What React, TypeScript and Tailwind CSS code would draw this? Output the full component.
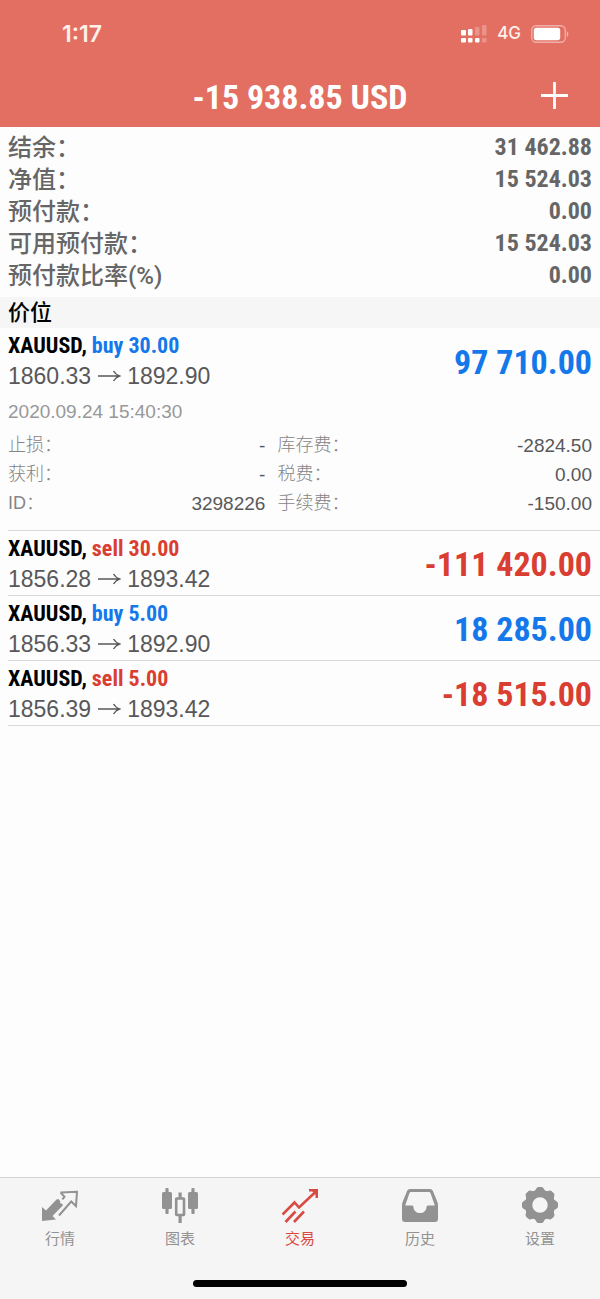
import type { ReactNode } from 'react'

type Side = 'buy' | 'sell'

interface Position {
  symbol: string
  side: Side
  volume: string
  open: string
  current: string
  profit: string
  negative: boolean
}

const summary = [
  { label: '结余：', value: '31 462.88' },
  { label: '净值：', value: '15 524.03' },
  { label: '预付款：', value: '0.00' },
  { label: '可用预付款：', value: '15 524.03' },
  { label: '预付款比率(%)', value: '0.00' },
]

const positions: Position[] = [
  { symbol: 'XAUUSD', side: 'buy', volume: '30.00', open: '1860.33', current: '1892.90', profit: '97 710.00', negative: false },
  { symbol: 'XAUUSD', side: 'sell', volume: '30.00', open: '1856.28', current: '1893.42', profit: '-111 420.00', negative: true },
  { symbol: 'XAUUSD', side: 'buy', volume: '5.00', open: '1856.33', current: '1892.90', profit: '18 285.00', negative: false },
  { symbol: 'XAUUSD', side: 'sell', volume: '5.00', open: '1856.39', current: '1893.42', profit: '-18 515.00', negative: true },
]

const details = [
  { label: '止损：', value: '-' },
  { label: '库存费：', value: '-2824.50' },
  { label: '获利：', value: '-' },
  { label: '税费：', value: '0.00' },
  { label: 'ID：', value: '3298226' },
  { label: '手续费：', value: '-150.00' },
]

const condensed = "font-['Roboto_Condensed',Roboto,sans-serif]"

const StatusBar = () => (
  <div className="flex h-16 items-center justify-between pt-1 pr-[31px] pl-[62px] font-['Inter',sans-serif] text-[#fff0ea]">
    <span className="text-[23px] font-semibold">1:17</span>
    <div className="flex items-center gap-2.5">
      <svg className="h-[18px] w-[26px]" viewBox="0 0 26 18" fill="#fff" aria-hidden="true">
        <rect x="0" y="5" width="5" height="5.5" rx="1" />
        <rect x="7" y="4" width="4.5" height="6.5" rx="1" />
        <rect x="14" y="2" width="4.5" height="8.5" rx="1" opacity="0.25" />
        <rect x="21" y="0" width="4.5" height="10.5" rx="1" opacity="0.25" />
        <rect x="0" y="13" width="5" height="4.5" rx="1" />
        <rect x="7" y="13" width="4.5" height="4.5" rx="1" />
        <rect x="14" y="13" width="4.5" height="4.5" rx="1" />
        <rect x="21" y="13" width="4.5" height="4.5" rx="1" opacity="0.25" />
      </svg>
      <span className="text-[17px] font-medium">4G</span>
      <svg className="h-[18px] w-[38px]" viewBox="0 0 38 18" aria-hidden="true">
        <rect x="0.75" y="0.75" width="33.5" height="16.5" rx="4.5" fill="none" stroke="#fff" strokeWidth="1.3" opacity="0.45" />
        <rect x="2.8" y="2.8" width="26.4" height="12.4" rx="2.6" fill="#fff" />
        <path d="M35.8 6.2c2 .6 2 5 0 5.6z" fill="#fff" opacity="0.5" />
      </svg>
    </div>
  </div>
)

const Header = () => (
  <header className="bg-[#e36f63] text-white">
    <StatusBar />
    <div className="grid h-[63px] grid-cols-[1fr_auto_1fr] items-center px-8">
      <h1 className={`col-start-2 pt-1 text-[34px] font-bold ${condensed}`}>-15 938.85 USD</h1>
      <button type="button" aria-label="新订单" className="justify-self-end">
        <svg className="size-[27px]" viewBox="0 0 27 27" stroke="#fff" strokeWidth="2.8" aria-hidden="true">
          <path d="M13.5 0v27M0 13.5h27" />
        </svg>
      </button>
    </div>
  </header>
)

const PositionRow = ({ position, children }: { position: Position; children?: ReactNode }) => (
  <li className="ml-2 border-b border-[#d9d9db]">
    <div className="flex h-16 items-center justify-between pr-2">
      <div className="pt-0.5">
        <p className={`text-[22px] leading-[30px] font-bold text-black ${condensed}`}>
          {position.symbol},{' '}
          <span className={position.side === 'buy' ? 'text-[#1478ea]' : 'text-[#da3d31]'}>
            {position.side} {position.volume}
          </span>
        </p>
        <p className="flex items-center gap-1.5 text-[23px] leading-[30px] text-[#58585a]">
          {position.open}
          <svg className="h-3 w-6" viewBox="0 0 24 12" fill="none" stroke="currentColor" strokeWidth="1.5" aria-hidden="true">
            <path d="M1 6h21M16.5 1Q18.500 4.500 22.500 6Q18.500 7.500 16.500 11" />
          </svg>
          {position.current}
        </p>
      </div>
      <span className={`pt-1 text-[34px] font-bold ${condensed} ${position.negative ? 'text-[#da3d31]' : 'text-[#1478ea]'}`}>
        {position.profit}
      </span>
    </div>
    {children}
  </li>
)

const PositionDetails = () => (
  <div className="pt-1.5 pr-2 pb-3 text-[19px]">
    <p className="text-[#98989a]">
      <time dateTime="2020-09-24T15:40:30">2020.09.24 15:40:30</time>
    </p>
    <dl className="mt-1 grid grid-cols-[9fr_11fr] gap-x-3 leading-[29px]">
      {details.map((item) => (
        <div key={item.label} className="flex justify-between">
          <dt className="text-lg leading-[29px] font-light text-[#858587]">{item.label}</dt>
          <dd className="text-[#58585a]">{item.value}</dd>
        </div>
      ))}
    </dl>
  </div>
)

const QuotesIcon = () => (
  <svg className="size-9" viewBox="0 0 36 36" fill="currentColor" aria-hidden="true">
    <path d="M0 20l4 3.500L14.500 12.500 16.500 12l1.800 2.200-.3 1.800 2.500 1L20.800 18.500 10.500 29l3.500 3.500L0 34z" />
    <path d="M18.500 5.500L35 4.800 34 19l-4.800-4.500L17 28.500M18.500 5.500l4 4.300-2.200 2.600" fill="none" stroke="currentColor" strokeWidth="2" />
  </svg>
)

const ChartIcon = () => (
  <svg className="size-9" viewBox="0 0 36 36" fill="currentColor" aria-hidden="true">
    <rect x="0" y="5" width="10" height="17" rx="1.5" />
    <rect x="3.400" y="1" width="3.200" height="26" rx="1" />
    <rect x="14.200" y="11.500" width="7.800" height="16.500" rx="0.500" fill="none" stroke="currentColor" strokeWidth="2.600" />
    <path d="M16.500 5.500h3.200v6h-3.200zM16.500 28h3.200v8h-3.200z" />
    <rect x="26" y="5" width="10" height="17" rx="1.5" />
    <rect x="29.400" y="1" width="3.200" height="26" rx="1" />
  </svg>
)

const TradeIcon = () => (
  <svg className="size-9" viewBox="0 0 36 36" fill="none" stroke="currentColor" strokeWidth="2.6" aria-hidden="true">
    <path d="M0.500 27.500L12.500 15.500l4.500 5L34 4.500M27 3.200h7.800V11M3.500 35l10-10.500M12 35l10-10.500" />
    <path d="M28.500 2.500H36V10z" fill="currentColor" stroke="none" />
  </svg>
)

const HistoryIcon = () => (
  <svg className="size-9" viewBox="0 0 36 36" fill="currentColor" fillRule="evenodd" aria-hidden="true">
    <path d="M8.500 2h19c2 0 3 .8 3.600 2.500L35.400 15c.4 1.200 .6 2 .6 3.300V32c0 2-1 3-3 3H3c-2 0-3-1-3-3V18.300C0 17 .2 16.200 .6 15L4.900 4.500C5.500 2.800 6.500 2 8.500 2zM9 5c-.8 0-1.300 .4-1.600 1.200L3.200 18.500h7c1 0 1.200 1 1.300 2 .4 3.500 3 5.500 6.500 5.500s6.100-2 6.500-5.500c.1-1 .3-2 1.300-2h7L28.600 6.200C28.300 5.400 27.800 5 27 5z" />
  </svg>
)

const SettingsIcon = () => (
  <svg className="size-9" viewBox="0 0 36 36" fill="currentColor" aria-hidden="true">
    <circle cx="18" cy="18" r="11.500" fill="none" stroke="currentColor" strokeWidth="7.500" />
    {[0, 45, 90, 135, 180, 225, 270, 315].map((angle) => (
      <path key={angle} d="M12.500 4.500L14.300 1.500Q15 0 16.500 0h3Q21 0 21.700 1.500L23.500 4.500z" transform={`rotate(${angle} 18 18)`} />
    ))}
  </svg>
)

const tabs = [
  { label: '行情', icon: QuotesIcon },
  { label: '图表', icon: ChartIcon },
  { label: '交易', icon: TradeIcon, active: true },
  { label: '历史', icon: HistoryIcon },
  { label: '设置', icon: SettingsIcon },
]

const TabBar = () => (
  <footer className="sticky bottom-0 border-t border-[#d3d3d5] bg-[#f5f5f5]">
    <nav className="grid grid-cols-5 pt-[9px]">
      {tabs.map((tab) => (
        <a
          key={tab.label}
          href="#"
          aria-current={tab.active ? 'page' : undefined}
          className={`flex flex-col items-center gap-1 ${tab.active ? 'text-[#d94a43]' : 'text-[#929292]'}`}
        >
          <tab.icon />
          <span className="text-[15px] leading-6">{tab.label}</span>
        </a>
      ))}
    </nav>
    <div className="mx-auto mt-[29px] mb-3 h-[7px] w-[214px] rounded-full bg-black" />
  </footer>
)

const App = () => {
  return (
    <div lang="zh-CN" className="flex min-h-screen flex-col bg-[#fdfdfd] font-['Liberation_Sans','Noto_Sans_CJK_SC',sans-serif]">
      <Header />
      <main className="flex-1">
        <dl className="px-2 pt-1 pb-1.5 text-[#666]">
          {summary.map((item) => (
            <div key={item.label} className="flex h-8 items-center justify-between">
              <dt className="pt-0.5 font-['Roboto','Noto_Sans_CJK_SC',sans-serif] text-[24px] leading-8 font-medium">{item.label}</dt>
              <dd className={`text-[24px] leading-8 font-bold ${condensed}`}>{item.value}</dd>
            </div>
          ))}
        </dl>
        <h2 className="bg-[#f6f6f6] px-2 text-[22px] leading-[31px] font-medium text-black">价位</h2>
        <ul>
          {positions.map((position, index) => (
            <PositionRow key={position.open} position={position}>
              {index === 0 && <PositionDetails />}
            </PositionRow>
          ))}
        </ul>
      </main>
      <TabBar />
    </div>
  )
}

export default App
